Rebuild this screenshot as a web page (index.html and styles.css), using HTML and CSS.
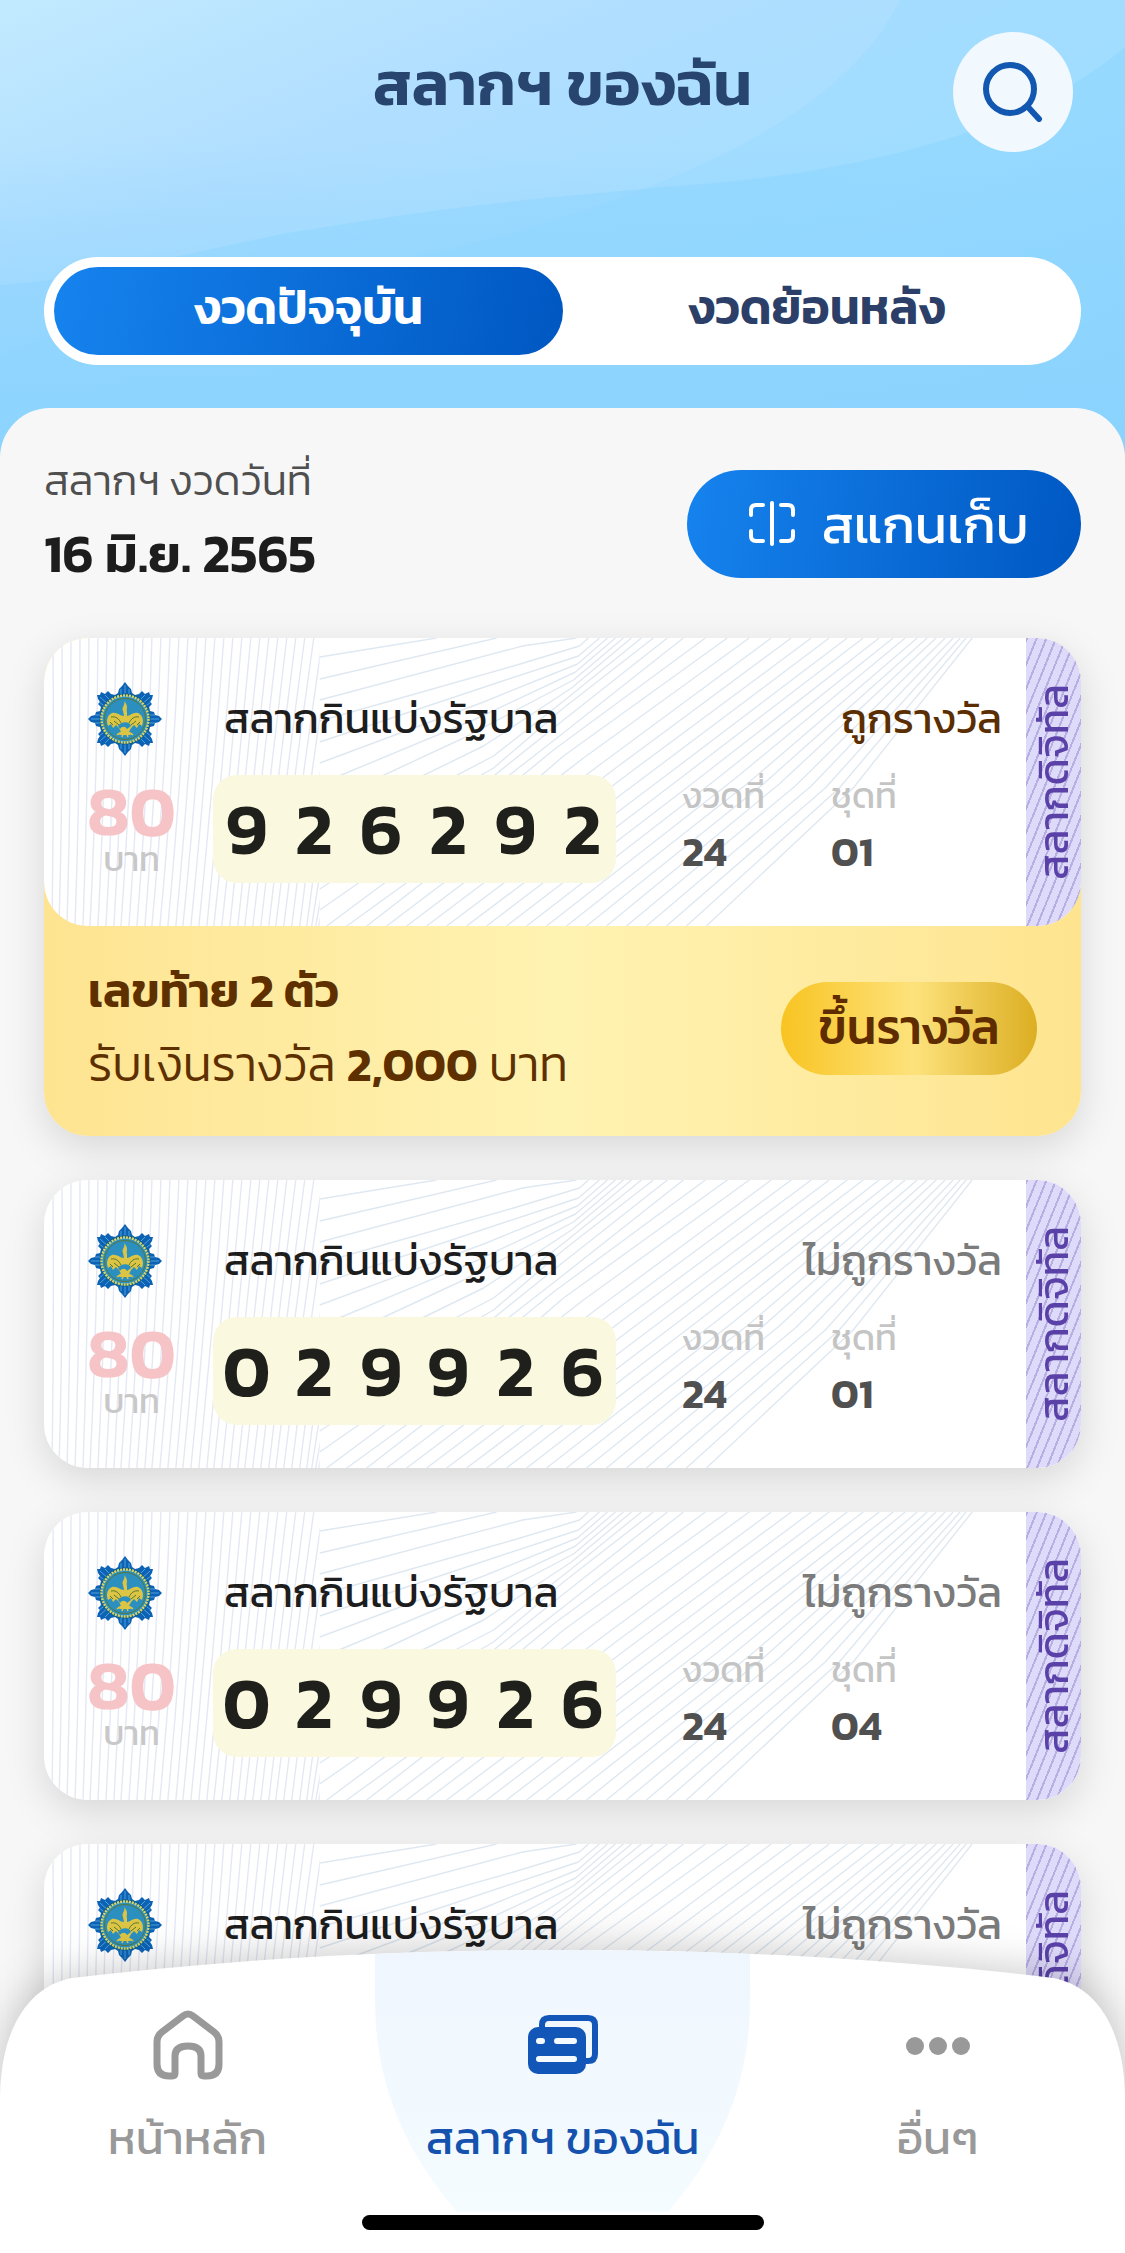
FILE: index.html
```html
<!DOCTYPE html>
<html lang="th">
<head>
<meta charset="utf-8">
<meta name="viewport" content="width=device-width, initial-scale=1">
<title>สลากฯ ของฉัน</title>
<link rel="stylesheet" href="styles.css">
</head>
<body>
<svg class="defs" aria-hidden="true">
  <defs>
    <clipPath id="left-part"><path d="M0 0H276V288H0Z"/></clipPath>
    <symbol id="lines" viewBox="0 0 1038 288" preserveAspectRatio="none">
      <path clip-path="url(#left-part)" fill="none" stroke="#e4e8f3" stroke-width="1.4" d="M9 0Q10 150 8 288M18 0Q19 150 15 288M27 0Q27 150 23 288M36 0Q36 150 31 288M45 0Q44 150 39 288M54 0Q53 150 46 288M63 0Q61 150 54 288M72 0Q70 150 62 288M81 0Q78 150 70 288M90 0Q87 150 77 288M99 0Q95 150 85 288M108 0Q104 150 93 288M117 0Q112 150 101 288M126 0Q121 150 108 288M135 0Q129 150 116 288M144 0Q137 150 124 288M153 0Q145 150 132 288M162 0Q153 150 139 288M171 0Q161 150 147 288M180 0Q169 150 155 288M189 0Q177 150 163 288M198 0Q185 150 170 288M207 0Q193 150 178 288M216 0Q201 150 186 288M225 0Q209 150 194 288M234 0Q217 150 201 288M243 0Q225 150 209 288M252 0Q233 150 217 288M261 0Q241 150 225 288M270 0Q249 150 232 288M279 0Q257 150 240 288M288 0Q265 150 248 288M297 0Q273 150 256 288M306 0Q281 150 263 288M315 0Q289 150 268 288M324 0Q297 150 272 288M333 0Q305 150 275 288"/>
      <path fill="none" stroke="#dfe8f1" stroke-width="1.4" stroke-linejoin="round" d="M276 19L393 0M276 41L453 0M276 62L479 8L533 0M276 83L470 28L536 8L545 0M276 104L450 46L535 18L556 0M276 125L440 64L534 26L564 0M276 146L430 82L532 34L572 0M276 167L420 100L530 42L580 0M276 188L440 108L528 50L588 0M276 209L450 118L524 60L598 0M276 230L450 130L520 70L610 0M276 251L440 146L520 82L624 0M276 272L430 165L516 98L640 0M283 288L420 186L510 112L662 0M303 288L425 200L520 118L684 0M323 288L540 120L706 0M343 288L560 124L728 0M363 288L575 128L748 0M383 288L590 132L768 0M403 288L605 136L786 0M423 288L622 138L804 0M443 288L640 138L820 0M463 288L656 140L836 0M483 288L672 142L850 0M503 288L690 142L862 0M523 288L706 144L874 0M543 288L720 146L884 0M563 288L736 146L893 0M583 288L752 148L902 0M603 288L768 148L910 0M623 288L782 150L917 0M643 288L796 150L923 0M663 288L810 150L929 0"/>
    </symbol>
    <symbol id="emblem" viewBox="0 0 74 74">
      <path fill="#0d62b4" d="M37 0L40 4L43 7L44 11L47 13L51 12L54 9L57 12L61 10L62 13L65 13L64 17L62 20L64 22L61 25L62 29L66 30L67 33L71 34L74 37L71 40L67 41L66 44L62 45L61 49L64 52L62 54L64 57L65 61L62 61L61 64L57 62L54 65L51 62L47 61L44 63L43 67L40 70L37 74L34 70L31 67L30 63L27 61L23 62L20 65L17 62L13 64L12 61L9 61L10 57L12 54L10 52L13 49L12 45L8 44L7 41L3 40L0 37L3 34L7 33L8 30L12 29L13 25L10 22L12 20L10 17L9 13L12 13L13 10L17 12L20 9L23 12L27 13L30 11L31 7L34 4Z"/>
      <path fill="none" stroke="#4aa2e0" d="M37 3V14M33 7V14M41 7V14M37 60V71M33 60V67M41 60V67M3 37H14M7 33H14M7 41H14M60 37H71M60 33H67M60 41H67M12 15L22 24M17 13L24 20M11 20L19 26M62 15L52 24M57 13L50 20M63 20L55 26M12 59L22 50M17 61L24 54M11 54L19 48M62 59L52 50M57 61L50 54M63 54L55 48"/>
      <circle cx="37" cy="37" r="25.500" fill="#0e5e86"/>
      <circle cx="37" cy="37" r="23.500" fill="#2b8fc0" stroke="#d8d469" stroke-width="2.500" stroke-dasharray="2 1"/>
      <circle cx="37" cy="37" r="20.500" fill="none" stroke="#57773e"/>
      <path fill="#dcc544" d="M36 19C38 23 33 25 35 29L36 34C32 34 29 30 24 31C19 33 18 39 20 44L23 42L25 46L28 43L31 46L33 50L31 53H43L41 50L43 46L46 43L49 46L51 42L54 44C56 39 55 33 50 31C45 30 42 34 39 34L39 30C38 27 41 24 36 19Z"/>
      <path fill="none" stroke="#59762f" d="M23 35C28 34 31 37 33 41M51 35C46 34 43 37 41 41M26 39L31 43M48 39L43 43M22 40L25 43M52 40L49 43"/>
      <path fill="#2b8fc0" d="M30 44C33 39 42 39 43 44L39 47C37 44 34 44 32 47Z"/>
      <path fill="none" stroke="#dcc544" stroke-width="1.500" d="M29 53C33 49 41 49 45 53M34 55L37 47L40 55"/>
    </symbol>
    <linearGradient id="sky" x1="0" y1="0" x2="1" y2="1">
      <stop offset="0" stop-color="#c2eaff"/><stop offset=".3" stop-color="#b0deff"/><stop offset=".6" stop-color="#a6dfff"/><stop offset="1" stop-color="#92d7ff"/>
    </linearGradient>
    <linearGradient id="spot" x1="0" y1="0" x2="0" y2="1">
      <stop offset="0" stop-color="#eff6fe"/><stop offset="1" stop-color="#f5fcff"/>
    </linearGradient>
    <linearGradient id="fade" x1="0" y1="0" x2="0" y2="1">
      <stop offset=".3" stop-color="#8ad3fe" stop-opacity="0"/><stop offset="1" stop-color="#8ad3fe" stop-opacity=".9"/>
    </linearGradient>
  </defs>
</svg>

<div class="app">
  <header class="top">
    <svg class="waves" viewBox="0 0 1125 460" preserveAspectRatio="none" aria-hidden="true">
      <path fill="url(#sky)" d="M0 0H1125V460H0Z"/>
      <path fill="#8fd6ff" fill-opacity=".28" d="M900 0C870 60 790 165 445 250C250 290 90 310 0 357V460H1125V0Z"/>
      <path fill="#86d1fe" fill-opacity=".38" d="M1125 47C1040 120 900 165 717 183C500 200 430 210 287 233C180 255 80 280 0 285V460H1125Z"/>
      <path fill="url(#fade)" d="M0 0H1125V460H0Z"/>
    </svg>
    <div class="title-row">
      <h1>สลากฯ ของฉัน</h1>
      <button class="search" type="button" aria-label="ค้นหา">
        <svg viewBox="0 0 60 60" fill="none" stroke="#1257b0" stroke-width="6" stroke-linecap="round"><circle cx="27" cy="27" r="24"/><path d="M45 45L56 57"/></svg>
      </button>
    </div>
    <div class="tabs" role="tablist">
      <button type="button" role="tab" aria-selected="true" class="tab active">งวดปัจจุบัน</button>
      <button type="button" role="tab" aria-selected="false" class="tab">งวดย้อนหลัง</button>
    </div>
  </header>

  <main class="sheet">
    <div class="draw">
      <div>
        <p class="draw-label">สลากฯ งวดวันที่</p>
        <h2 class="draw-date">16 มิ.ย. 2565</h2>
      </div>
      <button class="scan" type="button">
        <svg viewBox="0 0 46 46" fill="none" stroke="#fff" stroke-width="4" stroke-linecap="round" stroke-linejoin="round"><path d="M14 4H7Q2 4 2 9V14M2 30V35Q2 40 7 40H14M32 4H39Q44 4 44 9V14M44 30V35Q44 40 39 40H32M23 2V43"/></svg>
        สแกนเก็บ
      </button>
    </div>

    <article class="entry won">
      <div class="ticket">
        <svg class="pattern" aria-hidden="true"><use href="#lines"/></svg>
        <div class="face">
          <svg class="emblem" aria-hidden="true"><use href="#emblem"/></svg>
          <h3>สลากกินแบ่งรัฐบาล</h3>
          <p class="status">ถูกรางวัล</p>
          <p class="price"><b>80</b><span>บาท</span></p>
          <p class="number"><span>9</span><span>2</span><span>6</span><span>2</span><span>9</span><span>2</span></p>
          <dl class="info"><div><dt>งวดที่</dt><dd>24</dd></div><div><dt>ชุดที่</dt><dd>01</dd></div></dl>
        </div>
        <p class="strip"><span>สลากดิจิทัล</span></p>
      </div>
      <div class="prize">
        <div>
          <p class="prize-name">เลขท้าย 2 ตัว</p>
          <p class="prize-sum">รับเงินรางวัล <b>2,000</b> บาท</p>
        </div>
        <button class="claim" type="button">ขึ้นรางวัล</button>
      </div>
    </article>

    <article class="entry">
      <div class="ticket">
        <svg class="pattern" aria-hidden="true"><use href="#lines"/></svg>
        <div class="face">
          <svg class="emblem" aria-hidden="true"><use href="#emblem"/></svg>
          <h3>สลากกินแบ่งรัฐบาล</h3>
          <p class="status">ไม่ถูกรางวัล</p>
          <p class="price"><b>80</b><span>บาท</span></p>
          <p class="number"><span>0</span><span>2</span><span>9</span><span>9</span><span>2</span><span>6</span></p>
          <dl class="info"><div><dt>งวดที่</dt><dd>24</dd></div><div><dt>ชุดที่</dt><dd>01</dd></div></dl>
        </div>
        <p class="strip"><span>สลากดิจิทัล</span></p>
      </div>
    </article>

    <article class="entry">
      <div class="ticket">
        <svg class="pattern" aria-hidden="true"><use href="#lines"/></svg>
        <div class="face">
          <svg class="emblem" aria-hidden="true"><use href="#emblem"/></svg>
          <h3>สลากกินแบ่งรัฐบาล</h3>
          <p class="status">ไม่ถูกรางวัล</p>
          <p class="price"><b>80</b><span>บาท</span></p>
          <p class="number"><span>0</span><span>2</span><span>9</span><span>9</span><span>2</span><span>6</span></p>
          <dl class="info"><div><dt>งวดที่</dt><dd>24</dd></div><div><dt>ชุดที่</dt><dd>04</dd></div></dl>
        </div>
        <p class="strip"><span>สลากดิจิทัล</span></p>
      </div>
    </article>

    <article class="entry">
      <div class="ticket">
        <svg class="pattern" aria-hidden="true"><use href="#lines"/></svg>
        <div class="face">
          <svg class="emblem" aria-hidden="true"><use href="#emblem"/></svg>
          <h3>สลากกินแบ่งรัฐบาล</h3>
          <p class="status">ไม่ถูกรางวัล</p>
        </div>
        <p class="strip"><span>สลากดิจิทัล</span></p>
      </div>
    </article>
  </main>

  <nav class="bottom">
    <svg class="bar" viewBox="0 0 1125 303" preserveAspectRatio="none" aria-hidden="true">
      <path fill="#fff" d="M0 303V150C0 80 28 36 72 28C240 8 400 0 562 0S885 8 1053 28C1097 36 1125 80 1125 150V303Z"/>
      <path fill="url(#spot)" d="M375 4C440 1 500 0 562 0S685 1 750 4V48C750 120 730 190 668 262H457C395 190 375 120 375 48Z"/>
    </svg>
    <ul>
      <li><a href="#home">
        <svg viewBox="0 0 70 70" fill="none" stroke="#999" stroke-width="7" stroke-linejoin="round"><path d="M30 6Q35 2 40 6L61 22Q66 26 66 32V54Q66 66 54 66H51Q48 66 48 63V46Q48 36 35 36T22 46V63Q22 66 19 66H16Q4 66 4 54V32Q4 26 9 22Z"/></svg>
        <span>หน้าหลัก</span></a></li>
      <li><a href="#tickets" class="current" aria-current="page">
        <svg viewBox="0 0 70 70"><path fill="none" stroke="#1257b8" stroke-width="6" d="M14 18V15Q14 8 21 8H60Q67 8 67 15V44Q67 51 60 51H56"/><rect y="17" width="58" height="47" rx="10" fill="#1257b8"/><path stroke="#f4faff" stroke-width="6" stroke-linecap="round" d="M11 31H14M29 31H46M11 49H46"/></svg>
        <span>สลากฯ ของฉัน</span></a></li>
      <li><a href="#more">
        <svg viewBox="0 0 70 70" fill="#999"><circle cx="12" cy="36" r="9"/><circle cx="35" cy="36" r="9"/><circle cx="58" cy="36" r="9"/></svg>
        <span>อื่นๆ</span></a></li>
    </ul>
    <span class="home-bar"></span>
  </nav>
</div>
</body>
</html>
```
FILE: styles.css
```css
* { box-sizing: border-box; margin: 0; padding: 0; }
html, body { height: 100%; }
body { font-family: Kanit, "Noto Sans Thai", "Noto Sans", sans-serif; background: #f6f6f7; color: #1d1d1d; }
button { border: 0; font: inherit; cursor: pointer; }
svg { display: block; }
.defs { position: absolute; width: 0; height: 0; }

.app { height: 100vh; display: flex; flex-direction: column; overflow: hidden; position: relative; }

.top { position: relative; padding: 32px 44px 43px; }
.waves { position: absolute; inset: 0; width: 100%; height: calc(100% + 52px); }
.title-row { position: relative; display: grid; grid-template-columns: 120px 1fr 120px; align-items: center; padding: 0 8px; margin-bottom: 105px; }
h1 { grid-column: 2; text-align: center; font-size: 62px; line-height: 88px; font-weight: 600; color: #28456f; margin-bottom: 18px; }
.search { width: 120px; height: 120px; border-radius: 50%; background: #f1f8fe; display: grid; place-items: center; }
.search svg { width: 60px; height: 60px; }
.tabs { position: relative; display: flex; padding: 10px; height: 108px; border-radius: 54px; background: #fff; }
.tab { flex: 1; border-radius: 44px; background: none; color: #2b3f68; font-size: 48px; line-height: 64px; font-weight: 600; padding-bottom: 8px; }
.tab.active { background: linear-gradient(100deg, #1683ee, #0057c2); color: #fff; }

.sheet { position: relative; flex: 1; min-height: 0; overflow: hidden; display: flex; flex-direction: column; gap: 44px; padding: 44px 44px 0; background: #f7f7f8; border-radius: 50px 50px 0 0; }
.sheet > * { flex: none; }
.draw { display: flex; justify-content: space-between; align-items: center; height: 142px; padding-top: 2px; }
.draw-label { font-size: 42px; line-height: 60px; font-weight: 300; color: #4f4f4f; }
.draw-date { font-size: 53px; line-height: 86px; font-weight: 600; }
.scan { display: flex; align-items: center; justify-content: center; gap: 26px; width: 394px; height: 108px; padding-left: 10px; border-radius: 54px; background: linear-gradient(100deg, #1683ee, #0057c2); color: #fff; font-size: 53px; font-weight: 400; }
.scan svg { width: 46px; height: 46px; }

.entry { border-radius: 44px; box-shadow: 0 12px 40px rgba(0, 0, 0, .13); }
.ticket { position: relative; display: flex; height: 288px; border-radius: 44px; overflow: hidden; background: #fff; }
.pattern { position: absolute; inset: 0; width: 100%; height: 100%; }
.face { position: relative; flex: 1; display: grid; grid-template: 88px 108px / 125px 403px 1fr; row-gap: 12px; align-items: center; padding: 37px 24px 0 44px; align-content: start; }
.emblem { width: 74px; height: 74px; }
h3 { font-size: 42px; line-height: 64px; font-weight: 400; padding-left: 11px; white-space: nowrap; }
.status { font-size: 42px; line-height: 64px; text-align: right; color: #7b7b7b; }
.won .status { color: #5a2e00; }
.price { display: flex; flex-direction: column; align-items: center; width: 87px; }
.price b { font-size: 70px; line-height: 60px; font-weight: 600; color: #f6c3c6; }
.price span { font-size: 34px; line-height: 36px; color: #c8c8c8; }
.number { display: grid; grid-template-columns: repeat(6, 1fr); height: 108px; border-radius: 24px; background: #faf9df; text-align: center; font-size: 72px; line-height: 108px; font-weight: 600; color: #1f1f1b; }
.info { display: flex; padding-left: 66px; }
.info div { width: 149px; }
.info dt { font-size: 36px; line-height: 46px; color: #c4c4c4; }
.info dd { font-size: 42px; line-height: 68px; font-weight: 600; color: #505050; }
.strip { position: relative; width: 55px; display: grid; place-items: center; background: repeating-linear-gradient(112deg, #b7aee2 0 2px, #dedaf9 2px 9px); color: #5a41a8; font-size: 42px; line-height: 55px; font-weight: 400; }
.strip span { writing-mode: vertical-rl; transform: rotate(180deg); white-space: nowrap; }

.won { background: linear-gradient(90deg, #fee491, #fff3b2 50%, #fee48f); }
.prize { display: flex; justify-content: space-between; align-items: center; height: 210px; padding: 0 44px 6px; color: #5e3000; }
.prize-name { font-size: 47px; line-height: 72px; font-weight: 600; }
.prize-sum { font-size: 48px; line-height: 74px; font-weight: 300; }
.prize-sum b { font-weight: 600; }
.claim { width: 256px; height: 93px; padding-bottom: 2px; border-radius: 47px; background: linear-gradient(90deg, #f8c422, #fde27c 52%, #dcae22); color: #5e2c00; font-size: 48px; line-height: 64px; font-weight: 500; }

.bottom { position: absolute; left: 0; right: 0; bottom: 0; padding-top: 60px; height: 303px; }
.bar { position: absolute; inset: 0; width: 100%; height: 100%; filter: drop-shadow(0 -4px 20px rgba(0, 0, 0, .2)); }
.bottom ul { position: relative; display: grid; grid-template-columns: repeat(3, 1fr); list-style: none; }
.bottom a { display: flex; flex-direction: column; align-items: center; gap: 22px; color: #999; text-decoration: none; font-size: 46px; line-height: 72px; }
.bottom a svg { width: 70px; height: 70px; }
.bottom .current { color: #1552ae; }
.home-bar { position: absolute; left: 50%; bottom: 23px; width: 402px; height: 15px; margin-left: -201px; border-radius: 8px; background: #000; }
```
